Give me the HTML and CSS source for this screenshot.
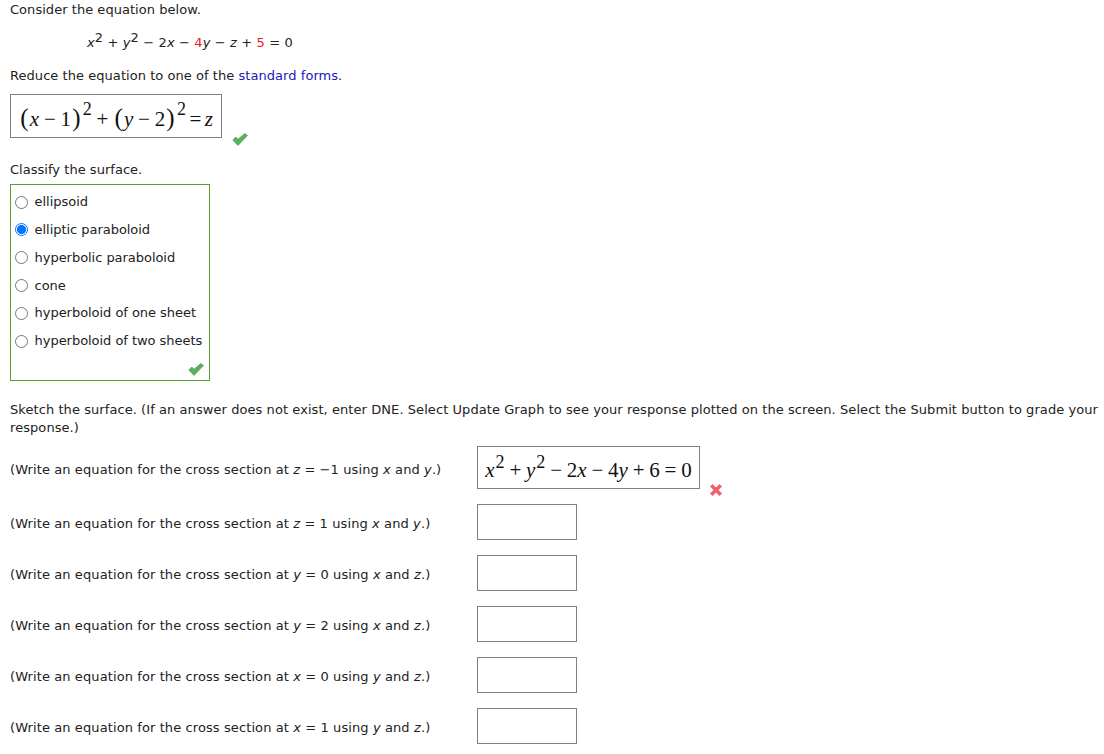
FILE: index.html
```html
<!DOCTYPE html>
<html lang="en">
<head>
<meta charset="utf-8">
<title>Question</title>
<link rel="stylesheet" href="styles.css">
</head>
<body>
<p class="line first">Consider the equation below.</p>
<p class="equation"><i>x</i><sup>2</sup> + <i>y</i><sup>2</sup> − 2<i>x</i> − <span class="red">4</span><i>y</i> − <i>z</i> + <span class="red">5</span> = 0</p>
<p class="line reduce">Reduce the equation to one of the <span class="link">standard forms</span>.</p>
<div class="answer-row">
  <div class="mathbox std"><span class="math"><span class="paren">(</span><i>x</i><span class="op">−</span>1<span class="paren">)</span><sup>2</sup><span class="op">+</span><span class="paren">(</span><i>y</i><span class="op">−</span>2<span class="paren">)</span><sup>2</sup><span class="op tight">=</span><i>z</i></span></div>
  <svg class="check check-a" viewBox="0 0 16 13" aria-hidden="true"><path d="M.8 7l3-3L6 6.300 12.800.5 15.500 2.500 6 12.500z" fill="#5cb25c" stroke="#4a8f4a" stroke-width=".6"/></svg>
</div>
<p class="line classify">Classify the surface.</p>
<div class="choices">
  <label class="choice"><span class="radio"></span>ellipsoid</label>
  <label class="choice"><span class="radio on"></span>elliptic paraboloid</label>
  <label class="choice"><span class="radio"></span>hyperbolic paraboloid</label>
  <label class="choice"><span class="radio"></span>cone</label>
  <label class="choice"><span class="radio"></span>hyperboloid of one sheet</label>
  <label class="choice"><span class="radio"></span>hyperboloid of two sheets</label>
  <svg class="check check-b" viewBox="0 0 16 13" aria-hidden="true"><path d="M.8 7l3-3L6 6.300 12.800.5 15.500 2.500 6 12.500z" fill="#5cb25c" stroke="#4a8f4a" stroke-width=".6"/></svg>
</div>
<p class="line sketch">Sketch the surface. (If an answer does not exist, enter DNE. Select Update Graph to see your response plotted on the screen. Select the Submit button to grade your response.)</p>
<div class="rows">
  <div class="row tall">
    <span class="prompt">(Write an equation for the cross section at <i>z</i> = −1 using <i>x</i> and <i>y</i>.)</span>
    <div class="mathbox wrong"><span class="math"><i>x</i><sup>2</sup><span class="op">+</span><i>y</i><sup>2</sup><span class="op">−</span>2<i>x</i><span class="op">−</span>4<i>y</i><span class="op">+</span>6<span class="op">=</span>0</span></div>
    <svg class="cross" viewBox="0 0 14 14" aria-hidden="true"><path d="M1 3.500L3.500 1 7 4.500 10.500 1 13 3.500 9.500 7 13 10.500 10.500 13 7 9.500 3.500 13 1 10.500 4.500 7z" fill="#f0616b"/></svg>
  </div>
  <div class="row"><span class="prompt">(Write an equation for the cross section at <i>z</i> = 1 using <i>x</i> and <i>y</i>.)</span><span class="blank"></span></div>
  <div class="row"><span class="prompt">(Write an equation for the cross section at <i>y</i> = 0 using <i>x</i> and <i>z</i>.)</span><span class="blank"></span></div>
  <div class="row"><span class="prompt">(Write an equation for the cross section at <i>y</i> = 2 using <i>x</i> and <i>z</i>.)</span><span class="blank"></span></div>
  <div class="row"><span class="prompt">(Write an equation for the cross section at <i>x</i> = 0 using <i>y</i> and <i>z</i>.)</span><span class="blank"></span></div>
  <div class="row"><span class="prompt">(Write an equation for the cross section at <i>x</i> = 1 using <i>y</i> and <i>z</i>.)</span><span class="blank"></span></div>
</div>
</body>
</html>
```
FILE: styles.css
```css
html, body { margin: 0; padding: 0; background: #fff; }
body {
  width: 1104px;
  height: 754px;
  overflow: hidden;
  padding-left: 10px;
  box-sizing: border-box;
  font-family: "DejaVu Sans", sans-serif;
  font-size: 13px;
  line-height: 18px;
  color: #222;
}
p { margin: 0; }
.first { padding-top: 1px; letter-spacing: .04px; }
.equation { margin: 14px 0 0 77px; line-height: 20px; letter-spacing: .12px; }
.equation sup { font-size: 13px; line-height: 0; }
.red { color: #e8202a; }
.link { color: #1a1ab8; }
.reduce { margin-top: 14px; letter-spacing: .05px; }
.answer-row { display: flex; margin-top: 9px; }
.mathbox {
  border: 1px solid #808080;
  box-sizing: border-box;
  font-family: "Liberation Serif", serif;
  color: #111;
  white-space: nowrap;
  display: flex;
  align-items: center;
  justify-content: center;
}
.math { display: block; line-height: 24px; }
.op { margin: 0 4.8px; }
.op.tight { margin: 0 3.5px; }
.std { width: 212px; height: 44px; font-size: 21px; }
.paren { font-size: 25px; margin: 0 1.2px; }
.std .math { position: relative; top: 2px; }
.std sup, .wrong sup { font-size: 18px; line-height: 0; position: relative; top: -9px; vertical-align: baseline; margin-left: 1px; }
.std sup { top: -11px; }
.check { display: block; }
.check-a { width: 16px; height: 13px; margin: 39px 0 0 10px; }
.classify { margin-top: 15px; letter-spacing: .03px; }
.choices {
  position: relative;
  margin-top: 5px;
  width: 200px;
  height: 197px;
  box-sizing: border-box;
  border: 1px solid #5aa02c;
  padding-top: 3.3px;
  display: flex;
  flex-direction: column;
}
.choice { display: flex; align-items: center; height: 27.8px; padding-left: 4px; gap: 6.6px; white-space: nowrap; letter-spacing: -.04px; }
.radio {
  width: 13px; height: 13px; box-sizing: border-box;
  border: 1px solid #767676; border-radius: 50%; background: #fff; flex: none;
}
.radio.on { border: 1.5px solid #0075ff; background: radial-gradient(circle, #0075ff 0 4.2px, #fff 4.8px); }
.check-b { position: absolute; right: 5px; bottom: 4px; width: 16px; height: 13px; }
.sketch { margin-top: 20px; width: 1094px; letter-spacing: .07px; }
.rows { margin-top: 9px; }
.row { display: flex; align-items: center; height: 51px; position: relative; }
.row.tall { height: 43px; margin-bottom: 7px; }
.prompt { width: 467px; flex: none; white-space: nowrap; letter-spacing: .1px; position: relative; top: 2px; }
.wrong { width: 223px; height: 43px; font-size: 21px; }
.wrong .math { position: relative; top: 2px; }
.cross { width: 14px; height: 14px; margin: 44px 0 0 9px; }
.blank { width: 100px; height: 36px; box-sizing: border-box; border: 1px solid #808080; flex: none; }
```
